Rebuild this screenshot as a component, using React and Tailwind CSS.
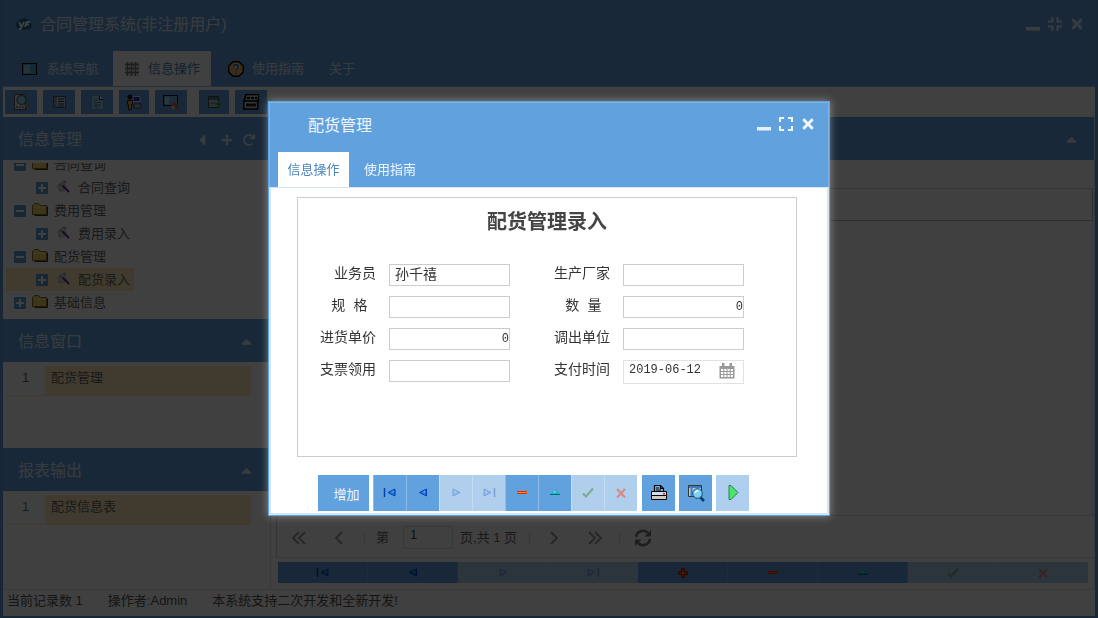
import React, { useState } from "react";
import { FaCaretLeft, FaCaretUp, FaPlus, FaRedo, FaTimes } from "react-icons/fa";

const sans = "font-['Liberation_Sans','Noto_Sans_CJK_SC',sans-serif]";
const mono = "font-['Liberation_Mono','Noto_Sans_CJK_SC',monospace]";

function Svg({ w = 16, h = 16, children }) {
  return (
    <svg width={w} height={h} viewBox={`0 0 ${w} ${h}`} fill="none" aria-hidden="true" className="shrink-0">
      {children}
    </svg>
  );
}

/* ---------- window icons ---------- */

const LogoIcon = () => (
  <Svg>
    <path d="M0 6 3 3l5-2 5 2 3 5-2 4-6 1-5-1-3-3z" fill="#1d6a8c" />
    <path d="M3 5l2 4M8 5l-3.500 7H3M9 10l1.500-5H14M10 7.500h3" stroke="#fff" strokeWidth="1.8" />
  </Svg>
);

const MinimizeIcon = () => (
  <Svg>
    <path d="M1 11h14v3.500H1z" fill="#fff" fillOpacity=".85" />
  </Svg>
);

const RestoreIcon = () => (
  <Svg>
    <path d="M5.500 1v4.500H1M10.500 1v4.500H15M5.500 15v-4.500H1M10.500 15v-4.500H15" stroke="#fff" strokeOpacity=".8" strokeWidth="2.2" />
  </Svg>
);

const MaximizeIcon = () => (
  <Svg>
    <path d="M2 6V2h4M10 2h4v4M14 10v4h-4M6 14H2v-4" stroke="#fff" strokeOpacity=".9" strokeWidth="2" />
  </Svg>
);

const ScreenIcon = () => (
  <Svg>
    <rect x=".5" y="2.500" width="14" height="11" fill="#4da4cf" stroke="#000" />
    <path d="M2 4h6v8H2z" fill="#8fc8e2" />
  </Svg>
);

const GridIcon = () => (
  <Svg>
    <path d="M3.500 1v14M7.500 1v14M11.500 1v14M1 3.500h14M1 7.500h14M1 11.500h14" stroke="#777" strokeWidth="1.300" />
    <path d="M1 1h14v14H1z" fill="#777" fillOpacity=".25" />
  </Svg>
);

const HelpIcon = () => (
  <Svg>
    <path d="M5 .7h6L15.300 5v6L11 15.300H5L.7 11V5z" fill="#efb14a" stroke="#000" strokeWidth="1.400" />
    <path d="M5.500 6c0-3 5-3 5-.3C10.500 8 8 7.500 8 10M8 11.500v2" stroke="#f7ead0" strokeWidth="3.400" />
    <path d="M5.500 6c0-3 5-3 5-.3C10.500 8 8 7.500 8 10M8 11.500v2" stroke="#3f76a8" strokeWidth="1.800" />
  </Svg>
);

/* ---------- toolbar icons ---------- */

const SearchDocIcon = () => (
  <Svg>
    <path d="M1.500.5h11v15h-11z" fill="#e8e2d4" stroke="#555" />
    <path d="M3 13h8" stroke="#333" strokeDasharray="2 1" />
    <path d="m11 9 4 5" stroke="#c98a3c" strokeWidth="2.200" />
    <circle cx="8.500" cy="6" r="4.500" fill="#8fd6ee" stroke="#29617a" strokeWidth="1.200" />
  </Svg>
);

const ListIcon = () => (
  <Svg>
    <path d="M2.500 2.500h12v11h-12z" fill="#bcd2e4" stroke="#456" />
    <path d="M3 3h3v10H3z" fill="#8aa4ba" />
    <path d="M7 5h6M7 7.500h6M7 10h6M7 12h6" stroke="#333" />
    <path d="M4 5h1M4 8h1M4 11h1" stroke="#c33" />
  </Svg>
);

const DocIcon = () => (
  <Svg>
    <path d="M2.500 1.500h8l4 4v10h-12z" fill="#9cc9e6" stroke="#5d93b5" />
    <path d="M10.500 1.500v4h4" fill="#fff" stroke="#222" />
    <path d="M5 6h4M5 8.500h7M5 11h7M5 13h5" stroke="#4f84a8" />
  </Svg>
);

const UserPcIcon = () => (
  <Svg>
    <path d="M7 2.500h7v5H7z" fill="#2a2ad0" stroke="#ddd" />
    <path d="M8 10h7v4H8z" fill="#a8bccb" stroke="#445" />
    <circle cx="4" cy="3" r="2.500" fill="#111" />
    <path d="M1.500 6.500h5v4h-1v5h-3v-5h-1z" fill="#e3a548" stroke="#3a2508" />
  </Svg>
);

const ScreenColorIcon = () => (
  <Svg>
    <path d="M.5 1.500h14v10H.5z" fill="#6cb3da" stroke="#000" />
    <path d="M2 3h4v7H2z" fill="#a9d5ea" />
    <circle cx="12" cy="12" r="3.500" fill="#efc93c" />
    <path d="M12 12V8.500A3.500 3.500 0 0 1 15.500 12z" fill="#3fae49" />
    <path d="M12 12H8.500A3.500 3.500 0 0 1 12 8.500z" fill="#c64bc1" />
    <path d="M12 12h3.500A3.500 3.500 0 0 1 12 15.500z" fill="#e0483c" />
  </Svg>
);

const CardAddIcon = () => (
  <Svg>
    <path d="M2.500 2.500h10v11h-10z" fill="#b5c3cb" stroke="#444" />
    <path d="M3 3h9v3H3z" fill="#4d7894" />
    <path d="M4 9h5" stroke="#555" />
    <path d="M12.500 7v6M9.500 10h6" stroke="#29a336" strokeWidth="2" />
  </Svg>
);

const PrinterIcon = () => (
  <Svg>
    <path d="M3 .5h13l-1 7H1z" fill="#bbb" stroke="#000" strokeWidth="1.600" />
    <path d="M4 4h10" stroke="#000" strokeDasharray="3 1" strokeWidth="2" />
    <path d="M.7 7h14v8H.7z" fill="#ccc" stroke="#000" strokeWidth="1.600" />
    <path d="M3 9.500h10v3H3z" fill="#222" />
  </Svg>
);

/* ---------- tree icons ---------- */

const Toggle = ({ open }) => (
  <Svg w={12} h={12}>
    <rect width="12" height="12" rx="1" fill="#5a9bd5" />
    <path d={open ? "M2 6h8" : "M2 6h8M6 2v8"} stroke="#fff" strokeWidth="2" />
  </Svg>
);

const FolderIcon = () => (
  <Svg h={18}>
    <path d="M.5 12.500v-9l2-2h4l2 2h6v9z" fill="#f2d25c" stroke="#8a6a1c" />
    <path d="M2.500 13.500h13v-9" stroke="#443208" />
    <path d="M1.500 5h12" stroke="#fff2b5" />
  </Svg>
);

const ToolIcon = () => (
  <Svg w={14} h={16}>
    <path d="M0 7 4 3l1-1 3-2 3 2-2 2 2 3-3 5-2-1-1 2-2-2 1-3z" fill="#ccc" />
    <path d="m3 5 2-1M8 1l2 2M2 9l2 1" stroke="#777" />
    <path d="m7 6 6 6" stroke="#6a2ba8" strokeWidth="2" />
    <path d="m6 5 2 2" stroke="#222" />
  </Svg>
);

/* ---------- record navigation icons ---------- */

const arrow = { fill: "#1d78e8", stroke: "#0040b0" };

const icons = {
  first: (
    <Svg>
      <path d="M2.500 3v9" stroke="#0040b0" strokeWidth="1.500" />
      <path d="M13 4v7L6 7.500z" {...arrow} />
      <path d="M11.500 6v1.500L9 7.300z" fill="#7fbcff" />
    </Svg>
  ),
  prev: (
    <Svg>
      <path d="M11.500 4v7l-7-3.500z" {...arrow} />
      <path d="M10 6v1.500l-2.500-.2z" fill="#7fbcff" />
    </Svg>
  ),
  next: (
    <Svg>
      <path d="M5 4v7l7-3.500z" {...arrow} />
      <path d="M6.500 6v1.500l2.500-.2z" fill="#7fbcff" />
    </Svg>
  ),
  last: (
    <Svg>
      <path d="M13.500 3v9" stroke="#0040b0" strokeWidth="1.500" />
      <path d="M3 4v7l7-3.500z" {...arrow} />
      <path d="M4.500 6v1.500L7 7.300z" fill="#7fbcff" />
    </Svg>
  ),
  add: (
    <Svg>
      <path d="M8 3v10M3 8h10" stroke="#c01800" strokeWidth="4" />
      <path d="M8 4v8M4 8h8" stroke="#ff7a1a" strokeWidth="1" />
    </Svg>
  ),
  remove: (
    <Svg>
      <path d="M3 6h10v3H3z" fill="#e02a00" />
      <path d="M3 7.500h10" stroke="#ff8a2a" />
    </Svg>
  ),
  edit: (
    <Svg>
      <path d="M8 4.500 3 9.500h10z" fill="#12b5c4" />
      <path d="M3 9.500h10" stroke="#046a75" />
      <path d="m8 5.500-2 2h3z" fill="#8cecf2" />
    </Svg>
  ),
  save: (
    <Svg>
      <path d="m3 8.500 3 3 7-8" stroke="#005a20" strokeWidth="2.200" />
    </Svg>
  ),
  cancel: (
    <Svg>
      <path d="m4 4 8 8.500M12 4l-8 8.500" stroke="#b01a10" strokeWidth="2.200" />
    </Svg>
  ),
};

const PrintIcon = () => (
  <Svg w={18} h={18}>
    <path d="M4.500 8V1.500h6l3 3V8" fill="#7db4e6" stroke="#000" strokeWidth="1.200" />
    <path d="M6 4h3M6 6h5M10.500 1.500v3h3" stroke="#000" strokeWidth="1.200" />
    <path d="M1.500 7.500h15v4h-15z" fill="#cfe0f5" stroke="#000" />
    <path d="M1.500 11.500h15v4h-15z" fill="#d0ccc0" stroke="#000" />
    <path d="M13 9h2v1.500h-2z" fill="#e02020" />
  </Svg>
);

const PreviewIcon = () => (
  <Svg w={18} h={18}>
    <path d="M1.500 1.500h13v11h-13z" fill="#a9d0ec" stroke="#333" />
    <path d="M2 3h12M4.500 2v10" stroke="#3f7fb5" strokeWidth="2" />
    <path d="m13.500 13.500 3.500 3.500" stroke="#063c66" strokeWidth="2.600" />
    <circle cx="10.500" cy="9.500" r="4.800" fill="#7fd0f7" stroke="#16496e" />
    <path d="M8 9c.5-2 2-2.500 3.500-2" stroke="#fff" strokeWidth="1.500" />
  </Svg>
);

const RunIcon = () => (
  <Svg>
    <path d="M4 .5h2L13 7.500l-7 7H4z" fill="#4be36a" stroke="#2f7d57" />
  </Svg>
);

const RefreshIcon = () => (
  <Svg w={18} h={18}>
    <path d="M2 8a7 7 0 0 1 12-4M16 10a7 7 0 0 1-12 4" stroke="#777" strokeWidth="2.600" />
    <path d="M17 1v6.500h-6.500zM1 17v-6.500h6.500z" fill="#777" />
  </Svg>
);

const Chevron = ({ d }) => (
  <Svg>
    <path d={d} stroke="#999" strokeWidth="1.800" />
  </Svg>
);

const CalendarIcon = () => (
  <Svg>
    <path d="M.5 3h15v12.500H.5z" fill="#999" />
    <path d="M3 0h2.500v4H3zM10.500 0H13v4h-2.500z" fill="#999" />
    <path
      d="M2 6h2.300v2H2zM5.300 6h2.200v2H5.300zM8.500 6h2.200v2H8.500zM11.700 6H14v2h-2.300zM2 9h2.300v2H2zM5.300 9h2.200v2H5.300zM8.500 9h2.200v2H8.500zM11.700 9H14v2h-2.300zM2 12h2.300v2H2zM5.300 12h2.200v2H5.300zM8.500 12h2.200v2H8.500zM11.700 12H14v2h-2.300z"
      fill="#fff"
    />
  </Svg>
);

/* ---------- main window ---------- */

const menu = [
  { name: "系统导航", icon: <ScreenIcon />, width: "w-[98px] pr-[7px]" },
  { name: "信息操作", icon: <GridIcon />, width: "w-[98px]", active: true },
  { name: "使用指南", icon: <HelpIcon />, width: "w-[110px]" },
  { name: "关于", width: "w-[42px]" },
];

const tools = [
  { name: "查询", icon: <SearchDocIcon />, width: "w-8" },
  { name: "列表", icon: <ListIcon />, width: "w-8" },
  { name: "文档", icon: <DocIcon />, width: "w-8" },
  { name: "用户", icon: <UserPcIcon />, width: "w-[30px]" },
  { name: "外观", icon: <ScreenColorIcon />, width: "w-8" },
  { name: "添加", icon: <CardAddIcon />, width: "ml-[6px] w-[30px]" },
  { name: "打印", icon: <PrinterIcon />, width: "w-8" },
];

const tree = [
  { name: "合同查询", open: true },
  { name: "合同查询", child: true },
  { name: "费用管理", open: true },
  { name: "费用录入", child: true },
  { name: "配货管理", open: true },
  { name: "配货录入", child: true, selected: true },
  { name: "基础信息" },
];

function PanelHeader({ title, children }) {
  return (
    <div className="flex h-[43px] shrink-0 items-center justify-between bg-[#61a1dd] pt-[2px] pr-[14px] pl-[15px] text-base text-white/80">
      <h2>{title}</h2>
      <div className="flex items-center gap-[10px]">{children}</div>
    </div>
  );
}

function Collapse() {
  return (
    <button type="button" aria-label="折叠">
      <FaCaretUp size={17} />
    </button>
  );
}

function ListRow({ index, text }) {
  return (
    <div className="mt-1 mr-[18px] ml-[3px] flex h-[30px] border-b border-[#fdecb8] bg-[#fdecb8]">
      <span className="w-[39px] bg-white pt-[2px] text-center">{index}</span>
      <span className="flex-1 pt-[2px] pl-[6px]">{text}</span>
    </div>
  );
}

function Sidebar() {
  return (
    <aside className="flex w-[266px] shrink-0 flex-col text-[13px] leading-5 text-[#666]">
      <PanelHeader title="信息管理">
        <button type="button" aria-label="收起"><FaCaretLeft size={18} /></button>
        <button type="button" aria-label="新增"><FaPlus size={12} /></button>
        <button type="button" aria-label="刷新"><FaRedo size={12} /></button>
      </PanelHeader>
      <ul className="mt-[3px] mb-[5px] flex h-[151px] flex-col justify-end overflow-hidden">
        {tree.map((node, i) => (
          <li
            key={i}
            className={`ml-[3px] flex h-[23px] w-32 shrink-0 items-center ${
              node.child ? "gap-2 pl-[30px]" : "gap-[6px] pl-2"
            } ${node.selected ? "bg-[#fdecb8]" : ""}`}
          >
            <Toggle open={node.open} />
            {node.child ? <ToolIcon /> : <FolderIcon />}
            <span>{node.name}</span>
          </li>
        ))}
      </ul>

      <PanelHeader title="信息窗口"><Collapse /></PanelHeader>
      <div className="h-[86px]">
        <ListRow index={1} text="配货管理" />
      </div>

      <PanelHeader title="报表输出"><Collapse /></PanelHeader>
      <div className="flex-1">
        <ListRow index={1} text="配货信息表" />
      </div>
    </aside>
  );
}

const Sep = () => <span className="h-3 w-px bg-[#ddd]" />;

function Pager() {
  return (
    <div className="flex h-[43px] items-center border-y border-[#d5e4f2] pt-[2px] text-[13px] text-[#666]">
      <button type="button" aria-label="首页" className="flex w-[44px] justify-center"><Chevron d="M8 2 2 8l6 6M14 2 8 8l6 6" /></button>
      <button type="button" aria-label="上一页" className="flex w-[35px] justify-center"><Chevron d="m11 2-6 6 6 6" /></button>
      <span className="w-2" />
      <Sep />
      <label htmlFor="page" className="pr-[14px] pl-[11px]">第</label>
      <input id="page" defaultValue="1" className="h-[23px] w-[50px] border border-[#ddd] px-[6px] pb-[6px] text-[#444]" />
      <span className="pr-3 pl-[7px]">页,共 1 页</span>
      <Sep />
      <button type="button" aria-label="下一页" className="flex w-[48px] justify-center"><Chevron d="m5 2 6 6-6 6" /></button>
      <button type="button" aria-label="末页" className="flex w-[33px] justify-center"><Chevron d="m2 2 6 6-6 6M8 2l6 6-6 6" /></button>
      <span className="w-2" />
      <Sep />
      <button type="button" aria-label="刷新" className="ml-[14px]"><RefreshIcon /></button>
    </div>
  );
}

const bottomButtons = [
  { name: "首条", key: "first" },
  { name: "上一条", key: "prev" },
  { name: "下一条", key: "next", disabled: true },
  { name: "末条", key: "last", disabled: true },
  { name: "新增", key: "add" },
  { name: "删除", key: "remove" },
  { name: "编辑", key: "edit" },
  { name: "保存", key: "save", disabled: true },
  { name: "取消", key: "cancel", disabled: true },
];

function Workspace() {
  return (
    <main className="ml-px flex flex-1 flex-col border-x border-[#d5e4f2]">
      <PanelHeader><Collapse /></PanelHeader>
      <div className="ml-[5px] flex flex-1 flex-col border-l border-[#b8d3ec]">
        <div className="mr-px h-[29px] border-b border-[#c5d9ea]" />
        <div className="mr-px h-8 border-r border-b border-[#bbb]" />
        <div className="mr-px flex-1 border-r border-[#d5e4f2]" />
        <Pager />
      </div>
      <div className="mt-1 mr-[6px] mb-[6px] ml-[7px] grid h-[21px] grid-cols-9">
        {bottomButtons.map((b) => (
          <button
            key={b.key}
            type="button"
            aria-label={b.name}
            disabled={b.disabled}
            className={`flex items-center justify-center border-r border-[#74aee3] bg-[#61a1dd] ${b.disabled ? "opacity-50" : ""}`}
          >
            {icons[b.key]}
          </button>
        ))}
      </div>
    </main>
  );
}

/* ---------- dialog ---------- */

const fields = [
  { id: "salesman", label: "业务员", value: "孙千禧" },
  { id: "maker", label: "生产厂家", value: "" },
  { id: "spec", label: "规\u00a0格\u00a0", value: "" },
  { id: "qty", label: "数\u00a0量\u00a0", value: "0", right: true },
  { id: "price", label: "进货单价", value: "0", right: true },
  { id: "unit", label: "调出单位", value: "" },
  { id: "cheque", label: "支票领用", value: "" },
  { id: "paydate", label: "支付时间", value: "2019-06-12", date: true },
];

const dialogButtons = [
  { name: "首条", key: "first" },
  { name: "上一条", key: "prev" },
  { name: "下一条", key: "next", disabled: true },
  { name: "末条", key: "last", disabled: true },
  { name: "删除", key: "remove" },
  { name: "编辑", key: "edit" },
  { name: "保存", key: "save", disabled: true },
  { name: "取消", key: "cancel", disabled: true },
];

function Field({ field, value, onChange }) {
  return (
    <div className="flex h-8 items-start">
      <label htmlFor={field.id} className="w-[80px] pr-[13px] text-right whitespace-nowrap">
        {field.label}
      </label>
      {field.date ? (
        <div className="flex h-6 w-[121px] items-center border border-[#e2e2e2] pr-2">
          <input
            id={field.id}
            value={value}
            onChange={onChange}
            className="w-full min-w-0 pb-1 pl-[5px] text-[12px] outline-none"
          />
          <button type="button" aria-label="选择日期" className="pb-[2px]"><CalendarIcon /></button>
        </div>
      ) : (
        <input
          id={field.id}
          value={value}
          onChange={onChange}
          className={`h-[22px] w-[121px] border border-[#ccc] outline-none ${
            field.right ? "pb-px text-right text-[12px]" : "pb-[5px] pl-[5px]"
          }`}
        />
      )}
    </div>
  );
}

function Dialog() {
  const [values, setValues] = useState(Object.fromEntries(fields.map((f) => [f.id, f.value])));

  return (
    <div
      role="dialog"
      aria-label="配货管理"
      className="w-[562px] border border-[#5ea5e5] bg-white shadow-[0_0_8px_rgba(255,255,255,0.4)]"
    >
      <header className="border-x border-t border-[#7cb3e6] bg-[#61a1dd]">
        <div className="flex h-[49px] items-center justify-between pr-3 pb-[3px] pl-[38px] text-base text-white/90">
          <h1>配货管理</h1>
          <div className="flex items-center gap-[6px] pb-1">
            <button type="button" aria-label="最小化"><MinimizeIcon /></button>
            <button type="button" aria-label="最大化"><MaximizeIcon /></button>
            <button type="button" aria-label="关闭"><FaTimes size={16} /></button>
          </div>
        </div>
        <nav className="flex h-[35px] pl-2 text-[13px]">
          <button type="button" className="w-[71px] bg-white pt-px text-[#4a86bf]">信息操作</button>
          <button type="button" className="ml-1 w-[74px] pt-px text-white/90">使用指南</button>
        </nav>
      </header>

      <div className="border-x-2 border-t border-b-2 border-[#d3e6f7]">
        <form className={`mt-[9px] mr-[30px] ml-[26px] h-[260px] border border-[#ccc] text-sm leading-5 text-[#333] ${mono}`}>
          <h2 className="pt-[12px] text-center text-xl leading-7 font-bold text-[#444]">配货管理录入</h2>
          <div className="mt-[26px] ml-[11px] grid w-[468px] grid-cols-2">
            {fields.map((f) => (
              <Field
                key={f.id}
                field={f}
                value={values[f.id]}
                onChange={(e) => setValues({ ...values, [f.id]: e.target.value })}
              />
            ))}
          </div>
        </form>

        <div className="mt-[18px] mb-[2px] ml-[47px] flex h-9">
          <button type="button" className="mr-1 w-[51px] bg-[#61a1dd] pt-[3px] pl-[6px] text-[13px] text-white/90">增加</button>
          {dialogButtons.map((b) => (
            <button
              key={b.key}
              type="button"
              aria-label={b.name}
              disabled={b.disabled}
              className={`flex w-[33px] items-center justify-center border-l border-[#8dbde8] bg-[#61a1dd] ${b.disabled ? "opacity-50" : ""}`}
            >
              {icons[b.key]}
            </button>
          ))}
          <button type="button" aria-label="打印" className="ml-[5px] flex w-[33px] items-center justify-center bg-[#61a1dd]"><PrintIcon /></button>
          <button type="button" aria-label="预览" className="ml-1 flex w-[33px] items-center justify-center bg-[#61a1dd]"><PreviewIcon /></button>
          <button type="button" aria-label="执行" className="ml-1 flex w-[33px] items-center justify-center bg-[#aecfee]"><RunIcon /></button>
        </div>
      </div>
    </div>
  );
}

export default function App() {
  return (
    <div className={`min-h-screen ${sans}`}>
      <div className="flex min-h-screen flex-col border-x-[3px] border-b-2 border-[#5b9bd8] bg-white">
        <header className="border-b border-[#8dbde8] bg-[#61a1dd]">
          <div className="flex h-[51px] items-center justify-between pr-[10px] pb-[2px] pl-[13px] text-base text-white/80">
            <div className="flex items-center gap-2">
              <LogoIcon />
              <h1>合同管理系统(非注册用户)</h1>
            </div>
            <div className="flex items-center gap-[6px] pb-[2px]">
              <button type="button" aria-label="最小化"><MinimizeIcon /></button>
              <button type="button" aria-label="还原"><RestoreIcon /></button>
              <button type="button" aria-label="关闭"><FaTimes size={16} /></button>
            </div>
          </div>
          <nav className="flex h-[35px] pl-3 text-[13px]">
            {menu.map((item) => (
              <button
                key={item.name}
                type="button"
                className={`flex items-center justify-center gap-2 ${item.width} ${
                  item.active ? "bg-white text-[#4a86bf]" : "text-white/80"
                }`}
              >
                {item.icon}
                {item.name}
              </button>
            ))}
          </nav>
        </header>

        <div className="flex h-[30px] items-center gap-[6px] pl-[2px]">
          {tools.map((tool) => (
            <button
              key={tool.name}
              type="button"
              aria-label={tool.name}
              className={`flex h-6 items-center justify-center bg-[#61a1dd] ${tool.width}`}
            >
              {tool.icon}
            </button>
          ))}
        </div>

        <div className="flex flex-1">
          <Sidebar />
          <Workspace />
        </div>

        <footer className="flex h-[27px] items-center gap-[25px] border-t border-[#e5e5e5] pb-1 pl-1 text-[13px] text-[#555]">
          <span>当前记录数 1</span>
          <span>操作者:Admin</span>
          <span>本系统支持二次开发和全新开发!</span>
        </footer>
      </div>

      <div className="fixed inset-0 flex items-center justify-center bg-black/75 pb-px">
        <Dialog />
      </div>
    </div>
  );
}
